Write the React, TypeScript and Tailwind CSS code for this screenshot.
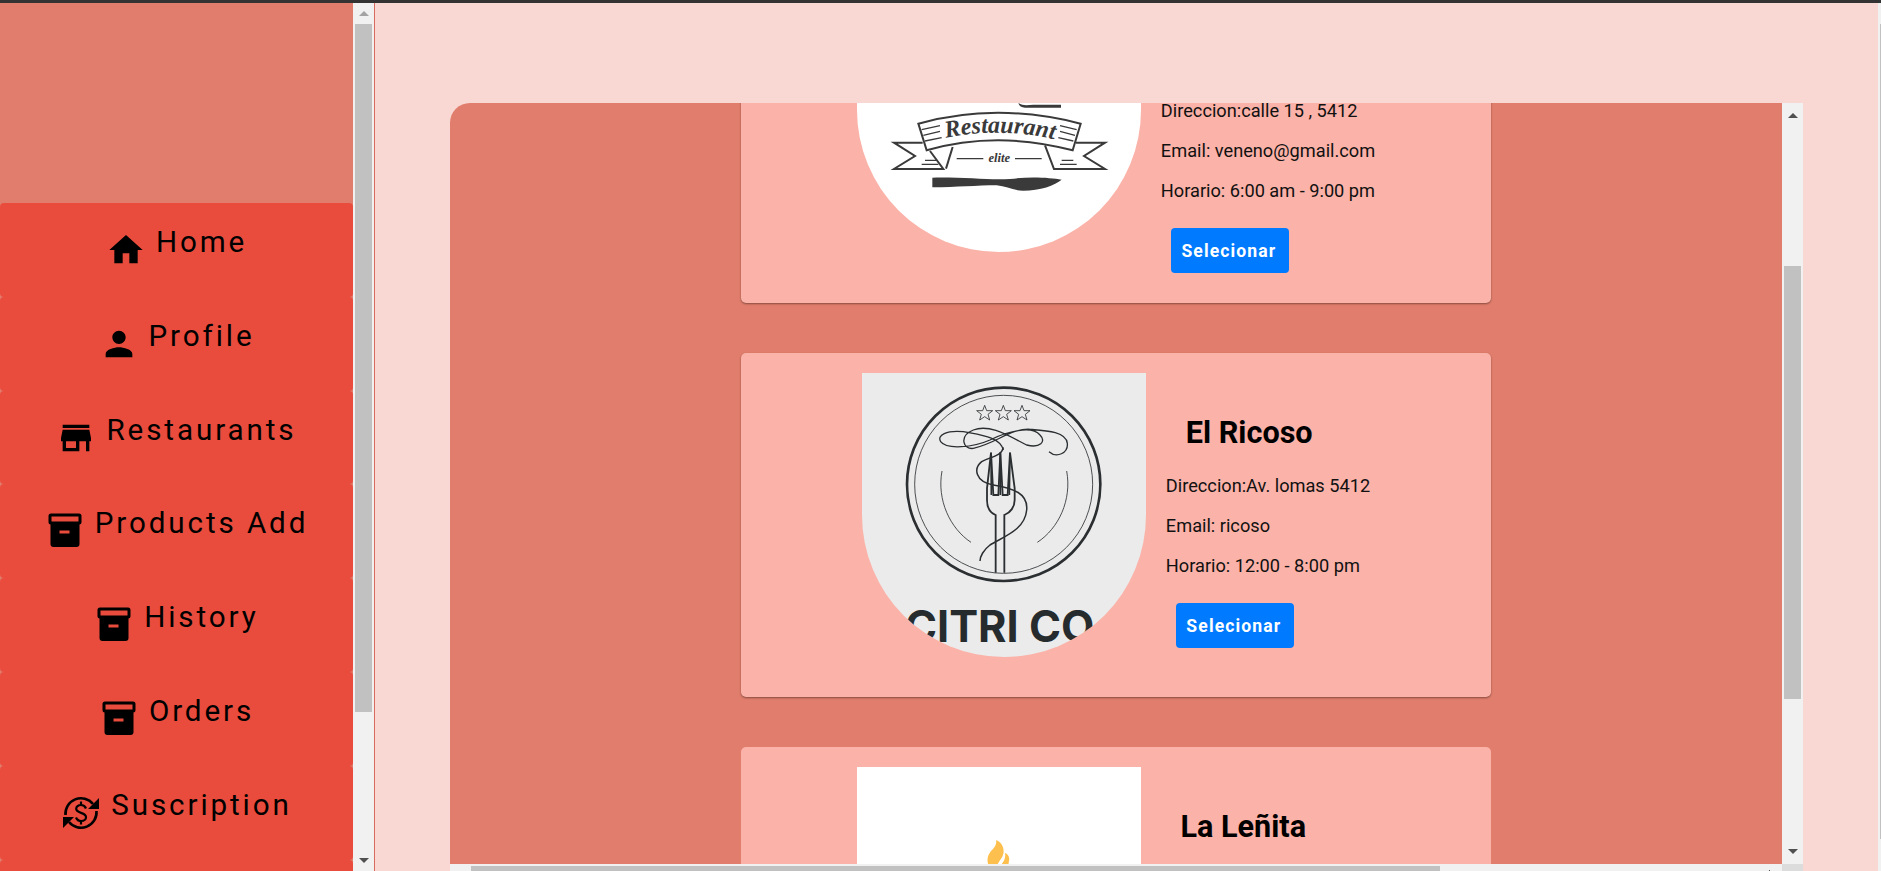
import { MdHome, MdPerson, MdStore } from "react-icons/md";

const ArchiveIcon = ({ className }: { className?: string }) => (
  <svg viewBox="0 0 40 40" className={className}>
    <rect x="5" y="4" width="30" height="8" rx="1" fill="none" stroke="currentColor" strokeWidth="3" />
    <path
      fillRule="evenodd"
      fill="currentColor"
      d="M5.5 13h29v20a3 3 0 0 1-3 3h-23a3 3 0 0 1-3-3zM14.5 19.6v3h10v-3z"
    />
  </svg>
);

const SubscriptionIcon = ({ className }: { className?: string }) => (
  <svg viewBox="0 0 40 40" className={className}>
    <g fill="none" stroke="currentColor" strokeWidth="2.6">
      <path d="M4.5 22A15.5 15.5 0 0 1 32 11" />
      <path d="M35.5 18A15.5 15.5 0 0 1 8 29" />
      <path
        strokeWidth="2.2"
        d="M25 15.500c-.8-2-2.700-3.500-5-3.500-2.800 0-4.800 1.600-4.800 3.800 0 5 9.800 3.200 9.800 8.400 0 2.200-2 3.800-4.800 3.800-2.400 0-4.300-1.300-5.200-3.500M20 8.500v3.500M20 28v3.500"
      />
    </g>
    <path fill="currentColor" d="M38 5v11H27zM2 35V24h11z" />
  </svg>
);

const navItems = [
  { label: "Home", icon: MdHome },
  { label: "Profile", icon: MdPerson },
  { label: "Restaurants", icon: MdStore },
  { label: "Products Add", icon: ArchiveIcon },
  { label: "History", icon: ArchiveIcon },
  { label: "Orders", icon: ArchiveIcon },
  { label: "Suscription", icon: SubscriptionIcon },
];

const ArrowUp = ({ className }: { className?: string }) => (
  <svg viewBox="0 0 10 5" className={`w-[10px] h-[5px] ${className ?? ""}`}>
    <polygon points="5,0 10,5 0,5" fill="currentColor" />
  </svg>
);

const ArrowDown = ({ className }: { className?: string }) => (
  <svg viewBox="0 0 10 5" className={`w-[10px] h-[5px] ${className ?? ""}`}>
    <polygon points="0,0 10,0 5,5" fill="currentColor" />
  </svg>
);

const RestaurantLogo = () => (
  <svg viewBox="381 -367 852 852" className="block w-full h-full">
    <path d="M865 38c15 10 30 6 45 5h83v9H885c-10 0-18-5-20-14z" fill="#3a3a3a" />
    <g fill="none" stroke="#3a3a3a" strokeWidth="6">
      <path d="M565 100Q800 35 1052 100L1028 180Q800 120 590 180Z" />
      <path d="M578 157H492L555 197L492 236H640L600 182" />
      <path d="M668 170L648 235" />
      <path d="M1038 157H1125L1062 197L1125 236H972L945 165" />
      <path strokeWidth="4" d="M575 118l55-12M580 135l50-12M585 152l50-10M1040 118l-50-12M1035 135l-45-12M1030 152l-45-10M575 222h50M585 210h35M1040 222h-50M1030 210h-35" />
    </g>
    <path d="M680 203h80v4h-80zM855 203h80v4h-80z" fill="#3a3a3a" />
    <path id="restaurant-curve" d="M630 146Q808 106 990 151" fill="none" />
    <text fontFamily="'Liberation Serif', serif" fontStyle="italic" fontWeight="700" fontSize="72" fill="#3a3a3a" textAnchor="middle">
      <textPath href="#restaurant-curve" startOffset="50%">Restaurant</textPath>
    </text>
    <text x="808" y="214" fontFamily="'Liberation Serif', serif" fontStyle="italic" fontWeight="700" fontSize="38" fill="#3a3a3a" textAnchor="middle">
      elite
    </text>
    <path
      fill="#3a3a3a"
      d="M607 262C700 260 780 270 840 266C900 258 960 262 995 268C975 285 930 301 880 301C850 301 830 288 800 285C740 285 680 291 607 291Z"
    />
  </svg>
);

const PlateLogo = () => (
  <svg viewBox="36 39 852 852" className="block w-full h-full">
    <g fill="none" stroke="#2b2f31">
      <circle cx="461" cy="373" r="290" strokeWidth="8" />
      <circle cx="461" cy="373" r="267" strokeWidth="2.500" />
      <path strokeWidth="2.500" d="M276 333C260 420 300 505 363 547" />
      <path strokeWidth="2.500" d="M650 333C666 420 626 505 562 547" />
      <g strokeWidth="2.500">
        <polygon points="404,136 410,152 428,152 414,163 419,180 404,170 389,180 394,163 380,152 398,152" />
        <polygon points="460,136 466,152 484,152 470,163 475,180 460,170 445,180 450,163 436,152 454,152" />
        <polygon points="516,136 522,152 540,152 526,163 531,180 516,170 501,180 506,163 492,152 510,152" />
      </g>
      <path
        strokeWidth="4"
        d="M597 275C620 295 655 280 652 250C648 215 590 212 540 208C480 205 440 250 370 265C340 270 325 228 370 210C420 190 480 230 530 255C570 265 590 245 570 225C545 195 470 215 420 240C370 262 290 270 272 245C260 225 290 210 340 215C390 225 450 230 460 270"
      />
      <path strokeWidth="4.500" d="M460 262C455 290 420 290 395 305C370 325 375 365 430 375C490 385 535 400 530 450C525 510 460 530 420 555C400 570 390 590 390 603" />
      <path
        strokeWidth="5.500"
        d="M437 638V465C420 458 411 440 411 420V385L423 278L430 405H445L451 278L458 405H473L480 278L494 385V420C494 440 482 458 463 465V638"
      />
      <path strokeWidth="5" d="M423 278L424 405M451 278V405M480 278L478 405" />
    </g>
    <text x="449" y="846" fontFamily="Inter, sans-serif" fontWeight="700" fontSize="130" fill="#262b2e" textAnchor="middle">
      CITRI CO
    </text>
  </svg>
);

const FlameLogo = () => (
  <svg viewBox="0 0 284 284" className="block w-full h-full">
    <path fill="#fdc04f" d="M139 73C145 75 148 82 146 88C145 92 141 94 140 100H132C129 92 131 88 134 84C138 80 140 77 139 73Z" />
    <path fill="#fdc04f" d="M148 86C151 87 153 90 152 94L151 100H142C146 96 149 92 148 86Z" />
  </svg>
);

function Row({ children }: { children: React.ReactNode }) {
  return <p className="h-10 flex items-center text-[18.2px] text-[#111111]">{children}</p>;
}

function SelectButton() {
  return (
    <button className="ml-[10px] mt-[17px] h-[45px] w-[118px] pt-px pr-[2px] bg-[#007bff] text-white rounded-[4px] text-[17.6px] font-bold tracking-[1.1px]">
      Selecionar
    </button>
  );
}

export default function App() {
  return (
    <div className="h-[871px] w-[1881px] overflow-hidden flex flex-col font-['Roboto',sans-serif] bg-[#f9d8d3]">
      <div className="h-[3px] bg-[#333333] shrink-0" />
      <div className="flex-1 flex min-h-0">
        {/* Sidebar */}
        <aside className="w-[353px] bg-[#e07d6c] overflow-hidden shrink-0 pt-[200px]">
          {navItems.map((item) => {
            const Icon = item.icon;
            return (
              <a
                key={item.label}
                className="h-[93.8px] flex justify-center items-start gap-[10px] pt-[22px] rounded-[4px] bg-[#e94c3c] text-black"
              >
                <Icon className="w-10 h-10 mt-[5px] shrink-0" />
                <span className="text-[29.6px] leading-[35px] tracking-[2.9px]">{item.label}</span>
              </a>
            );
          })}
          <div className="h-[93.8px] rounded-[4px] bg-[#e94c3c]" />
        </aside>

        <div className="w-[21px] bg-[#f1f1f1] shrink-0 flex flex-col items-center">
          <div className="h-[21px] w-full flex items-center justify-center">
            <ArrowUp className="text-[#a3a3a3]" />
          </div>
          <div className="w-[17px] h-[688px] bg-[#c1c1c1]" />
          <div className="flex-1 w-full flex items-end justify-center pb-[8px]">
            <ArrowDown className="text-[#505050]" />
          </div>
        </div>
        <div className="w-[1px] bg-[#d96a5e] shrink-0" />

        {/* Main */}
        <main className="flex-1 min-w-0 flex flex-col pt-[100px] pl-[75px] pr-[75px]">
          <div className="flex-1 min-h-0 flex flex-col">
            <div className="flex-1 min-h-0 flex">
              <div className="flex-1 min-w-0 overflow-hidden rounded-tl-[20px] bg-[#e07d6c] flex flex-col items-center gap-[50px]">
                {/* first card is scrolled past the top */}
                <div className="w-[750px] h-[344px] mt-[-144px] shrink-0 bg-[#fbb2a8] rounded-[5px] shadow-[0_1px_2px_rgba(0,0,0,0.4)] flex justify-center items-end gap-5">
                  <div className="w-[284px] h-[284px] mb-[51px] bg-white rounded-b-[142px] overflow-hidden shrink-0">
                    <RestaurantLogo />
                  </div>
                  <div className="mb-[30px]">
                    <Row>Direccion:calle 15 , 5412</Row>
                    <Row>Email: veneno@gmail.com</Row>
                    <Row>Horario: 6:00 am - 9:00 pm</Row>
                    <SelectButton />
                  </div>
                </div>

                <div className="w-[750px] h-[344px] shrink-0 bg-[#fbb2a8] rounded-[5px] shadow-[0_1px_2px_rgba(0,0,0,0.4)] flex justify-center items-start pt-5 gap-5">
                  <div className="w-[284px] h-[284px] bg-[#ebebeb] rounded-b-[142px] overflow-hidden shrink-0">
                    <PlateLogo />
                  </div>
                  <div className="pt-[43px]">
                    <h2 className="pl-5 mb-[16px] text-[30.6px] leading-[34px] font-bold text-black">El Ricoso</h2>
                    <Row>Direccion:Av. lomas 5412</Row>
                    <Row>Email: ricoso</Row>
                    <Row>Horario: 12:00 - 8:00 pm</Row>
                    <SelectButton />
                  </div>
                </div>

                <div className="w-[750px] h-[344px] shrink-0 bg-[#fbb2a8] rounded-[5px] flex justify-center items-start pt-5 gap-5">
                  <div className="w-[284px] h-[284px] bg-white overflow-hidden shrink-0">
                    <FlameLogo />
                  </div>
                  <div className="pt-[43px] w-[215px]">
                    <h2 className="pl-5 text-[30.6px] leading-[34px] font-bold text-black">La Leñita</h2>
                  </div>
                </div>
              </div>

              <div className="w-[21px] bg-[#f1f1f1] shrink-0 flex flex-col items-center">
                <div className="h-[21px] w-full flex items-end justify-center pb-[6px]">
                  <ArrowUp className="text-[#505050]" />
                </div>
                <div className="w-[17px] h-[433px] mt-[142px] bg-[#c1c1c1]" />
                <div className="flex-1 w-full flex items-end justify-center pb-[10px]">
                  <ArrowDown className="text-[#505050]" />
                </div>
              </div>
            </div>

            {/* horizontal scrollbar, cut off by the window */}
            <div className="h-[7px] shrink-0 flex">
              <div className="flex-1 bg-[#f1f1f1] pt-[2px] pl-[21px] flex">
                <div className="w-[969px] h-[5px] bg-[#c1c1c1]" />
                <div className="ml-auto mr-[12px] mt-[4px] w-[1px] h-[1px] bg-[#505050]" />
              </div>
              <div className="w-[21px] bg-[#dcdcdc]" />
            </div>
          </div>
        </main>

        <div className="w-[3px] bg-[#f1f1f1] shrink-0 pl-[2px] pt-[21px] pb-[32px]">
          <div className="w-[1px] h-full bg-[#c1c1c1]" />
        </div>
      </div>
    </div>
  );
}
